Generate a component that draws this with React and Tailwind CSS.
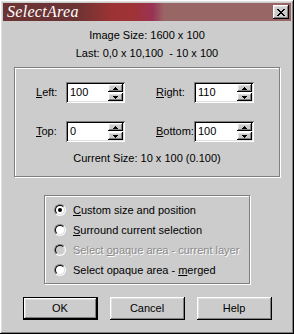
import React from 'react';

const raised =
  'shadow-[inset_-1px_-1px_#000,inset_1px_1px_#fff,inset_-2px_-2px_#808080,inset_2px_2px_#dfdfdf]';
const sunken =
  'shadow-[inset_1px_1px_#808080,inset_-1px_-1px_#fff,inset_2px_2px_#000,inset_-2px_-2px_#dfdfdf]';
const etched = 'border border-[#808080] shadow-[inset_1px_1px_#fff,1px_1px_#fff]';

const SpinArrow = ({ up }) => (
  <svg width="5" height="3" viewBox="0 0 5 3" className="block">
    {up ? <path d="M2 0h1v1h1v1h1v1H0V2h1V1h1z" fill="#000" /> : <path d="M0 0h5v1H4v1H3v1H2V2H1V1H0z" fill="#000" />}
  </svg>
);

const Spinner = ({ value, width }) => (
  <div className={`flex h-[21px] ${width} bg-white ${sunken} p-[2px]`}>
    <div className="flex-1 pl-[2px] text-[11px] leading-[17px] text-black">{value}</div>
    <div className="flex w-[15px] flex-col">
      <div className={`flex h-[8px] items-center justify-center bg-[#cccccc] ${raised}`}>
        <SpinArrow up />
      </div>
      <div className={`mt-[1px] flex h-[8px] items-center justify-center bg-[#cccccc] ${raised}`}>
        <SpinArrow />
      </div>
    </div>
  </div>
);

const Radio = ({ checked, disabled, children }) => (
  <div className="flex h-[20px] items-center">
    <div className="h-[12px] w-[12px] rounded-full border border-t-[#808080] border-l-[#808080] border-r-white border-b-white">
      <div
        className={`flex h-full w-full items-center justify-center rounded-full border border-t-black border-l-black border-r-[#dfdfdf] border-b-[#dfdfdf] ${
          disabled ? 'bg-[#cccccc]' : 'bg-white'
        }`}
      >
        {checked && <div className="h-[4px] w-[4px] rounded-full bg-black" />}
      </div>
    </div>
    <span
      className={`ml-[7px] text-[11px] ${
        disabled ? 'text-[#8a8a8a] [text-shadow:1px_1px_#fff]' : 'text-black'
      }`}
    >
      {children}
    </span>
  </div>
);

const Button = ({ children, isDefault }) => (
  <div
    className={`flex h-[23px] w-[75px] items-center justify-center bg-[#cccccc] text-[11px] ${
      isDefault
        ? 'border border-black shadow-[inset_-1px_-1px_#000,inset_1px_1px_#fff,inset_-2px_-2px_#808080,inset_2px_2px_#dfdfdf]'
        : raised
    }`}
  >
    {children}
  </div>
);

export default function App() {
  return (
    <div
      className={`flex h-[334px] w-[294px] flex-col bg-[#cccccc] p-[3px] ${raised} text-black`}
      style={{ fontFamily: '"Liberation Sans", Arial, sans-serif' }}
    >
      {/* title bar */}
      <div className="flex h-[18px] shrink-0 items-center justify-between bg-[linear-gradient(90deg,#6b3333_0%,#6b3333_25%,#9c3333_38%,#a03338_46%,#993355_52%,#996666_56%,#996666_100%)] pl-[4px] pr-[2px]">
        <span className="font-['Liberation_Serif'] text-[16px] italic leading-[18px] tracking-[0.3px] text-white">
          SelectArea
        </span>
        <div className={`flex h-[14px] w-[16px] items-center justify-center bg-[#cccccc] ${raised}`}>
          <svg width="8" height="7" viewBox="0 0 8 7">
            <path d="M0 0L7 7M1 0L8 7M7 0L0 7M8 0L1 7" stroke="#000" strokeWidth="1" />
          </svg>
        </div>
      </div>

      <div className="mt-[5px] text-center text-[11px] leading-[18px]">Image Size: 1600 x 100</div>
      <div className="text-center text-[11px] leading-[18px]">Last: 0,0 x 10,100&nbsp; - 10 x 100</div>

      {/* group 1 */}
      <div className={`mx-[11px] mt-[5px] h-[110px] ${etched} flex flex-col`}>
        <div className="mt-[14px] flex items-center pl-[21px]">
          <span className="w-[30px] text-[11px]">
            <u>L</u>eft:
          </span>
          <Spinner value="100" width="w-[59px]" />
          <span className="ml-[31px] w-[38px] text-[11px]">
            <u>R</u>ight:
          </span>
          <Spinner value="110" width="w-[60px]" />
        </div>
        <div className="mt-[18px] flex items-center pl-[21px]">
          <span className="w-[30px] text-[11px]">
            <u>T</u>op:
          </span>
          <Spinner value="0" width="w-[59px]" />
          <span className="ml-[31px] w-[38px] text-[11px]">
            <u>B</u>ottom:
          </span>
          <Spinner value="100" width="w-[60px]" />
        </div>
        <div className="mt-[9px] text-center text-[11px] leading-[14px]">Current Size: 10 x 100 (0.100)</div>
      </div>

      {/* group 2 */}
      <div className={`mx-auto mt-[18px] h-[89px] w-[206px] ${etched} pl-[9px] pt-[4px]`}>
        <Radio checked>
          <u>C</u>ustom size and position
        </Radio>
        <Radio>
          <u>S</u>urround current selection
        </Radio>
        <Radio disabled>
          Select <u>o</u>paque area - current layer
        </Radio>
        <Radio>
          Select opaque area - <u>m</u>erged
        </Radio>
      </div>

      <div className="mt-[13px] flex justify-center gap-[12px]">
        <Button isDefault>OK</Button>
        <Button>Cancel</Button>
        <Button>Help</Button>
      </div>
    </div>
  );
}
